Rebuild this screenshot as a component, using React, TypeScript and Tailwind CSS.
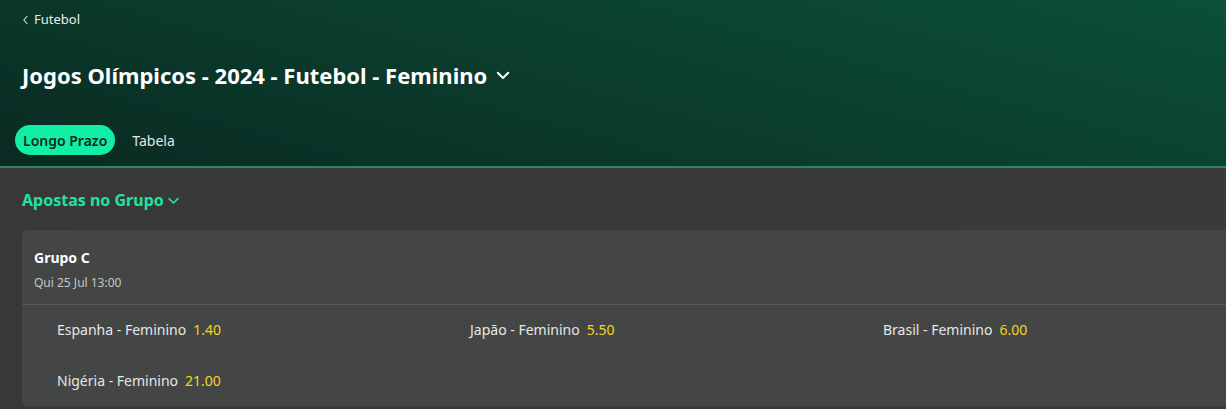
import React from "react";

const Chevron = ({ className = "" }: { className?: string }) => (
  <svg className={className} viewBox="0 0 12 12" fill="none" stroke="currentColor" strokeWidth="1.3" strokeLinecap="round" strokeLinejoin="round">
    <path d="M2.5 4.5 6 8l3.5-3.5" />
  </svg>
);

const Outcome = ({ name, odd }: { name: string; odd: string }) => (
  <div className="flex items-center h-[51px] text-[14px]">
    <span className="text-[#e6e6e6]">{name}</span>
    <span className="ml-[7px] text-[#f5d41f]">{odd}</span>
  </div>
);

export default function App() {
  return (
    <div className="w-[1226px] h-[409px] overflow-hidden bg-[#383838]" style={{ fontFamily: '"Noto Sans", "Open Sans", sans-serif' }}>
      <header className="h-[166px] bg-[linear-gradient(15deg,#0a2a22_0%,#0b3b2d_45%,#0b5039_100%)] px-[22px] flex flex-col">
        <div className="flex items-center gap-[5px] pt-[10px] h-[30px] text-[13px] text-[#e8ece9]">
          <svg className="w-[7px] h-[10px]" viewBox="0 0 7 10" fill="none" stroke="currentColor" strokeWidth="1.1" strokeLinecap="round" strokeLinejoin="round">
            <path d="M5 1.5 1.8 5 5 8.5" />
          </svg>
          <span>Futebol</span>
        </div>
        <div className="flex items-center mt-[29px] h-[32px]">
          <h1 className="text-[22px] font-bold text-white">Jogos Olímpicos - 2024 - Futebol - Feminino</h1>
          <Chevron className="w-[18px] h-[18px] ml-[7px] text-white" />
        </div>
        <div className="flex items-center mt-[34px] -ml-[7px] gap-[17px]">
          <span className="h-[30px] px-[8px] rounded-full bg-[#12eea6] text-[#0d2a22] text-[14px] font-semibold flex items-center">Longo Prazo</span>
          <span className="text-[14px] text-[#e4e8e6]">Tabela</span>
        </div>
      </header>
      <div className="h-[2px] bg-[#2b8863]" />
      <div className="bg-[linear-gradient(90deg,#383838,#3a3a3a)] pl-[22px] h-[241px]">
        <div className="flex items-center h-[62px] pt-[2px]">
          <span className="text-[16px] font-bold text-[#1fe4a0]">Apostas no Grupo</span>
          <Chevron className="w-[15px] h-[15px] ml-[2px] text-[#1fe4a0]" />
        </div>
        <div className="bg-[#434645] rounded-l-[4px] h-[176px]">
          <div className="px-[12px] pt-[18px] h-[75px] border-b border-[#565958]">
            <div className="text-[14px] font-bold text-white leading-[20px]">Grupo C</div>
            <div className="text-[12px] text-[#c3c6c5] mt-[7px] leading-[16px]">Qui 25 Jul 13:00</div>
          </div>
          <div className="grid grid-cols-[413px_413px_1fr] pl-[35px] -mt-[1px]">
            <Outcome name="Espanha - Feminino" odd="1.40" />
            <Outcome name="Japão - Feminino" odd="5.50" />
            <Outcome name="Brasil - Feminino" odd="6.00" />
            <Outcome name="Nigéria - Feminino" odd="21.00" />
          </div>
        </div>
      </div>
    </div>
  );
}
